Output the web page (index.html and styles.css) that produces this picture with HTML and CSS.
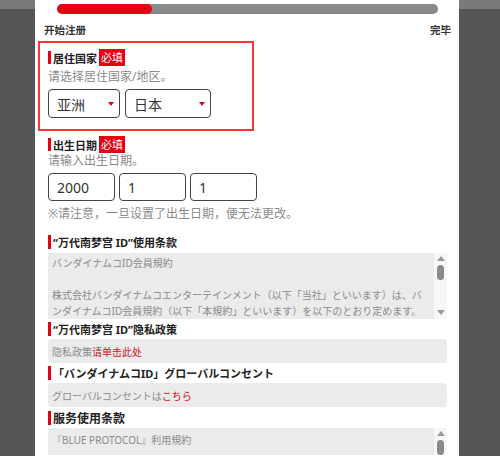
FILE: index.html
```html
<!DOCTYPE html>
<html lang="zh-CN">

<head>
    <meta charset="UTF-8">
    <meta name="viewport" content="width=device-width, initial-scale=1.0">
    <title>注册</title>
    <link rel="stylesheet" href="styles.css">
</head>

<body>

    <div class="panel">
        <div class="progress">
            <div class="progress-fill"></div>
        </div>
        <div class="steps">
            <span>开始注册</span>
            <span>完毕</span>
        </div>

        <div class="form">
            <div class="field field-focus">
                <div class="label">居住国家<span class="required">必填</span></div>
                <div class="hint">请选择居住国家/地区。</div>
                <div class="selects">
                    <div class="select select-region">亚洲<span class="caret"></span></div>
                    <div class="select select-country">日本<span class="caret"></span></div>
                </div>
            </div>

            <div class="field field-birth">
                <div class="label">出生日期<span class="required">必填</span></div>
                <div class="hint">请输入出生日期。</div>
                <div class="dates">
                    <input type="text" class="date-input" value="2000">
                    <input type="text" class="date-input" value="1">
                    <input type="text" class="date-input" value="1">
                </div>
                <div class="note">※请注意，一旦设置了出生日期，便无法更改。</div>
            </div>

            <div class="term-title first">“万代南梦宫 ID”使用条款</div>
            <div class="term-box">
                <div class="term-text" lang="ja">
                    バンダイナムコID会員規約<br><br>
                    株式会社バンダイナムコエンターテインメント（以下「当社」といいます）は、バンダイナムコID会員規約（以下「本規約」といいます）を以下のとおり定めます。
                </div>
                <div class="scrollbar">
                    <span class="arrow-up"></span>
                    <span class="thumb"></span>
                    <span class="arrow-down"></span>
                </div>
            </div>

            <div class="term-title">“万代南梦宫 ID”隐私政策</div>
            <div class="link-box"><span>隐私政策</span><a href="#">请单击此处</a></div>

            <div class="term-title" lang="ja">「バンダイナムコID」グローバルコンセント</div>
            <div class="link-box" lang="ja"><span>グローバルコンセントは</span><a href="#">こちら</a></div>

            <div class="term-title big">服务使用条款</div>
            <div class="term-box term-box-last">
                <div class="term-text" lang="ja">『BLUE PROTOCOL』利用規約</div>
                <div class="scrollbar">
                    <span class="arrow-up"></span>
                    <span class="thumb"></span>
                </div>
            </div>
        </div>
    </div>

</body>

</html>
```

FILE: styles.css
```css
body {
    margin: 0;
    height: 456px;
    overflow: hidden;
    font-family: "Noto Sans", "Noto Sans CJK SC", sans-serif;
    background: linear-gradient(#7a7a7a 0, #7a7a7a 9px, #555 9px);
    color: #333;
}

[lang="ja"] {
    font-family: "Noto Sans", "Noto Sans CJK JP", sans-serif;
}

.panel {
    width: 424px;
    height: 456px;
    margin-left: 35px;
    background: white;
    padding-top: 4px;
    box-sizing: border-box;
    overflow: hidden;
}

.progress {
    height: 10px;
    margin: 0 21px 0 22px;
    background: #8a8a8a;
    border-radius: 5px;
    overflow: hidden;
}

.progress-fill {
    width: 95px;
    height: 100%;
    background: #e60012;
    border-radius: 5px;
}

.steps {
    display: flex;
    justify-content: space-between;
    margin-top: 8px;
    padding: 0 8px 0 9px;
    font-size: 10.5px;
    line-height: 16px;
    font-weight: bold;
    color: #333;
}

.form {
    padding: 0 12px 0 13px;
    margin-top: 3px;
}

.field-focus {
    width: 216px;
    margin-left: -10px;
    padding: 6px 8px 11px;
    border: 2px solid #ff3333;
    box-sizing: border-box;
}

.field-birth {
    margin-top: 5px;
}

.label {
    display: flex;
    align-items: center;
    height: 17px;
    font-size: 11px;
    font-weight: bold;
    color: #222;
}

.label::before {
    content: "";
    width: 3px;
    height: 13px;
    margin-right: 2px;
    background: #e60012;
}

.required {
    margin-left: 2px;
    padding: 0 2px;
    line-height: 17px;
    font-size: 11px;
    font-weight: normal;
    color: white;
    background: #e60012;
}

.hint {
    margin-top: 3px;
    font-size: 12px;
    line-height: 16px;
    color: #8a8a8a;
}

.field-birth .hint {
    margin-top: 0;
}

.selects {
    display: flex;
    gap: 5px;
    margin-top: 4px;
}

.select {
    display: flex;
    align-items: center;
    justify-content: space-between;
    height: 29px;
    padding: 0 5px 0 8px;
    border: 1.3px solid #444;
    border-radius: 4px;
    box-sizing: border-box;
    font-size: 14px;
    color: #333;
}

.select-region {
    width: 72px;
}

.select-country {
    width: 86px;
}

.caret {
    width: 0;
    height: 0;
    border-left: 3.5px solid transparent;
    border-right: 3.5px solid transparent;
    border-top: 4px solid #e60012;
}

.dates {
    display: flex;
    gap: 4px;
    margin-top: 4px;
}

.date-input {
    width: 67px;
    height: 28px;
    margin: 0;
    padding: 0 8px;
    border: 1.3px solid #444;
    border-radius: 4px;
    box-sizing: border-box;
    font-family: "Noto Sans", sans-serif;
    font-size: 14px;
    color: #333;
    background: white;
    outline: none;
}

.note {
    margin-top: 5px;
    font-size: 12px;
    line-height: 16px;
    color: #8a8a8a;
}

.term-title {
    display: flex;
    align-items: center;
    height: 16px;
    margin-top: 2px;
    font-size: 11px;
    font-weight: bold;
    color: #222;
}

.term-title::before {
    content: "";
    flex: none;
    width: 3px;
    height: 14px;
    margin-right: 2px;
    background: #e60012;
}

.term-title.first {
    margin-top: 12px;
}

.term-title.big {
    font-size: 12px;
    margin-top: 3px;
}

.term-box {
    display: flex;
    height: 66px;
    margin-top: 3px;
}

.term-text {
    flex: 1;
    padding: 2px 4px 0;
    overflow: hidden;
    font-size: 10px;
    line-height: 16px;
    color: #8a8a8a;
    background: #ebebeb;
}

.term-box-last {
    height: 27px;
    margin-top: 2px;
}

.term-box-last .term-text {
    padding-top: 4px;
}

.scrollbar {
    display: flex;
    flex-direction: column;
    align-items: center;
    width: 13px;
    padding-top: 3px;
    box-sizing: border-box;
    background: #f7f7f7;
}

.arrow-up,
.arrow-down {
    width: 0;
    height: 0;
    border-left: 4px solid transparent;
    border-right: 4px solid transparent;
}

.arrow-up {
    border-bottom: 5px solid #999;
}

.arrow-down {
    margin-top: auto;
    margin-bottom: 4px;
    border-top: 5px solid #999;
}

.thumb {
    width: 7px;
    height: 15px;
    margin-top: 4px;
    border-radius: 4px;
    background: #8a8a8a;
}

.link-box {
    display: flex;
    align-items: center;
    height: 24px;
    margin-top: 2px;
    padding: 0 4px;
    border-radius: 4px;
    font-size: 10px;
    color: #8a8a8a;
    background: #ebebeb;
}

.link-box a {
    color: #d0121b;
    text-decoration: none;
}
```
